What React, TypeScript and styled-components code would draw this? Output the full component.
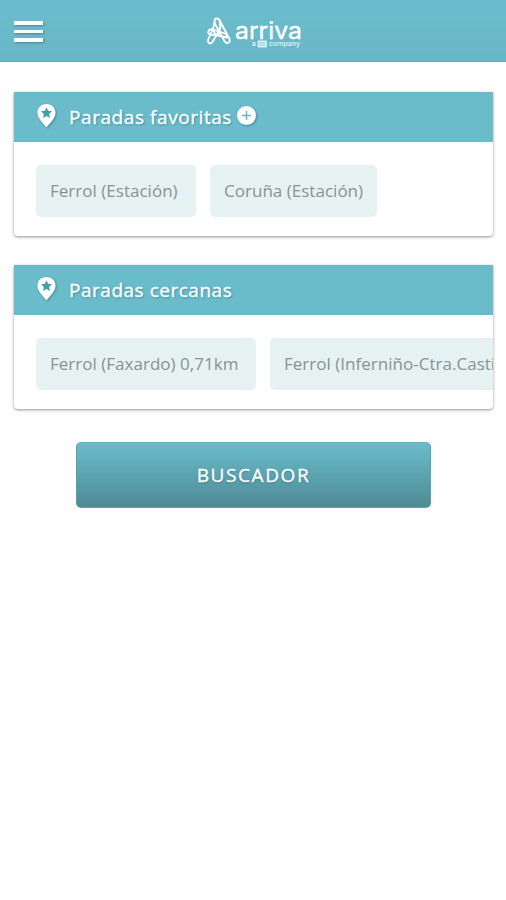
import React from 'react';
import styled, { createGlobalStyle } from 'styled-components';

const TEAL = '#6abccb';

const GlobalStyle = createGlobalStyle`
  * { box-sizing: border-box; }
  body { margin: 0; background: #fefefe; font-family: 'Open Sans', sans-serif; }
`;

const Page = styled.div`
  display: flex;
  flex-direction: column;
  width: 506px;
  height: 900px;
  overflow: hidden;
`;

const TopBar = styled.header`
  display: grid;
  grid-template-columns: 206px 100px 1fr;
  align-items: center;
  height: 62px;
  flex: none;
  background: linear-gradient(#6bbdcd, #68b6c6);
  border-bottom: 1px solid #58afbf;
`;

const MenuButton = styled.button`
  display: flex;
  flex-direction: column;
  gap: 5px;
  width: 29px;
  margin: 2px 0 0 14px;
  padding: 0;
  border: 0;
  background: none;
`;

const MenuLine = styled.span`
  height: 3.5px;
  background: #fff;
  box-shadow: 1px 1px 2px rgba(30, 90, 105, 0.5);
`;

const Content = styled.main`
  display: flex;
  flex-direction: column;
  padding: 30px 13px 0 14px;
`;

const Card = styled.section`
  height: 144px;
  margin-bottom: 29px;
  overflow: hidden;
  background: #fff;
  border-radius: 0 0 4px 4px;
  box-shadow: 0 1px 3px rgba(0, 0, 0, 0.42);
`;

const CardHeader = styled.div`
  display: flex;
  align-items: center;
  height: 50px;
  padding: 0 0 3px 23px;
  background: ${TEAL};
  svg { filter: drop-shadow(1px 1px 1px rgba(30, 90, 105, 0.5)); }
`;

const Title = styled.h2<{ $spacing: number }>`
  margin: 3px 0 0 13px;
  padding-right: 5px;
  color: #fff;
  font-size: 19px;
  font-weight: 400;
  line-height: 46px;
  letter-spacing: ${(p) => p.$spacing}px;
  -webkit-text-stroke: 0.35px #fff;
  text-shadow: 1px 1px 2px rgba(30, 90, 105, 0.55);
`;

const ChipRow = styled.div`
  display: flex;
  gap: 14px;
  padding: 23px 0 0 22px;
`;

const Chip = styled.div<{ $width: number }>`
  flex: none;
  width: ${(p) => p.$width}px;
  height: 51.5px;
  padding-left: 14px;
  border-radius: 5px;
  background: #e6f2f2;
  color: #879393;
  font-size: 17px;
  line-height: 52px;
  letter-spacing: 0.02px;
  white-space: nowrap;
`;

const SearchButton = styled.button`
  align-self: center;
  width: 355px;
  height: 66px;
  margin: 4px 0 0 0;
  padding: 0;
  border: 1px solid #5a9faa;
  border-top-color: #61b3c1;
  border-radius: 5px;
  background: linear-gradient(#69bccb, #4f8b95);
  color: #fff;
  font-family: 'Open Sans', sans-serif;
  font-size: 19px;
  letter-spacing: 1.6px;
  -webkit-text-stroke: 0.35px #fff;
  text-shadow: 0 1px 2px rgba(20, 70, 80, 0.4);
`;

const Logo = () => (
  <svg width="100" height="36" viewBox="0 0 100 36" role="img" aria-label="arriva">
    <g fill="none" stroke="#fff" strokeWidth="1.8" strokeLinejoin="round" strokeLinecap="round">
      <path d="M8.500 8Q8.500 5.500 11 5.500Q13 5.500 14 8L23.500 26Q24.500 29 22 30Q20 30.500 18.500 28L9 11Z" />
      <path d="M8 10L7.500 14L2 27Q1.500 30 4 30.500Q6 30.500 7 28L14.500 15L13.500 8" />
      <path d="M2.500 18Q3.500 15.500 7 16.500L19 20.500Q22 22 21 24.500L12 22.500L4 21.500Q1.500 20.500 2.500 18Z" />
      <path d="M7 16.500L10 23M14.500 13L12 22.500" />
    </g>
    <text x="29" y="25.500" fill="#fff" stroke="#fff" strokeWidth=".35" fontFamily="Inter, sans-serif" fontSize="24" textLength="67" lengthAdjust="spacingAndGlyphs">arriva</text>
    <text x="46" y="33" fill="#e9f7f9" fontFamily="Inter, sans-serif" fontSize="6.500" fontWeight="600">a</text>
    <rect x="51.500" y="27.500" width="9.500" height="7" rx="1.200" fill="#d6eff3" />
    <text x="52.700" y="32.900" fill="#a5d8e0" fontFamily="Inter, sans-serif" fontSize="5" fontWeight="700">DB</text>
    <text x="63" y="33" fill="#d6eff3" fontFamily="Inter, sans-serif" fontSize="6.500" fontWeight="600" textLength="31" lengthAdjust="spacingAndGlyphs">company</text>
  </svg>
);

const StopPin = () => (
  <svg width="19" height="24" viewBox="0 0 19 24">
    <path d="M9.500 0C4.200 0 .5 3.800.5 8.800c0 5.600 5.500 10 9 14.700 3.500-4.700 9-9.100 9-14.700C18.500 3.800 14.800 0 9.500 0Z" fill="#fff" />
    <path d="m9.500 3.300 1.600 3.500 3.900.5-2.800 2.700.7 3.900-3.400-1.900-3.400 1.900.7-3.900L4 7.300l3.900-.5Z" fill="#459eac" />
  </svg>
);

const AddIcon = () => (
  <svg width="19" height="19" viewBox="0 0 19 19">
    <circle cx="9.500" cy="9.500" r="9.500" fill="#fff" />
    <path d="M9.500 5v9M5 9.500h9" stroke="#6fb4bf" strokeWidth="1.500" />
  </svg>
);

export default function App() {
  return (
    <Page>
      <GlobalStyle />
      <TopBar>
        <MenuButton aria-label="Menú"><MenuLine /><MenuLine /><MenuLine /></MenuButton>
        <Logo />
      </TopBar>
      <Content>
        <Card>
          <CardHeader>
            <StopPin />
            <Title $spacing={0.57}>Paradas favoritas</Title>
            <AddIcon />
          </CardHeader>
          <ChipRow>
            <Chip $width={160}>Ferrol (Estación)</Chip>
            <Chip $width={167}>Coruña (Estación)</Chip>
          </ChipRow>
        </Card>
        <Card>
          <CardHeader>
            <StopPin />
            <Title $spacing={0.52}>Paradas cercanas</Title>
          </CardHeader>
          <ChipRow>
            <Chip $width={220}>Ferrol (Faxardo) 0,71km</Chip>
            <Chip $width={300}>Ferrol (Inferniño-Ctra.Castilla)</Chip>
          </ChipRow>
        </Card>
        <SearchButton>BUSCADOR</SearchButton>
      </Content>
    </Page>
  );
}
